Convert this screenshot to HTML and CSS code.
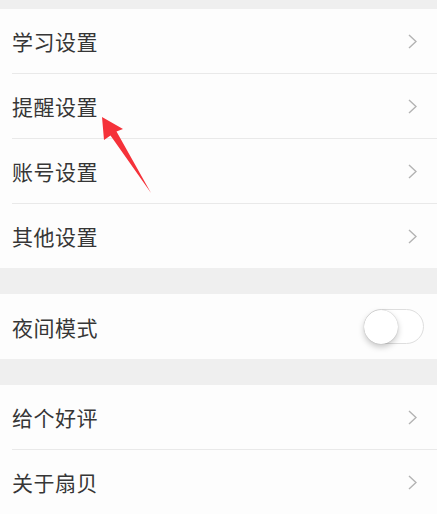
FILE: index.html
```html
<!DOCTYPE html>
<html lang="zh-CN">
<head>
  <meta charset="UTF-8" />
  <meta name="viewport" content="width=device-width, initial-scale=1.0"/>
  <title>设置</title>
  <link rel="stylesheet" href="styles.css">
</head>
<body>
  <div class="settings">
    <div class="group">
      <div class="item"><span class="label">学习设置</span><svg class="chevron" viewBox="0 0 9 15"><polyline points="1,1 8,7.5 1,14"/></svg></div>
      <div class="item"><span class="label">提醒设置</span><svg class="chevron" viewBox="0 0 9 15"><polyline points="1,1 8,7.5 1,14"/></svg></div>
      <div class="item"><span class="label">账号设置</span><svg class="chevron" viewBox="0 0 9 15"><polyline points="1,1 8,7.5 1,14"/></svg></div>
      <div class="item"><span class="label">其他设置</span><svg class="chevron" viewBox="0 0 9 15"><polyline points="1,1 8,7.5 1,14"/></svg></div>
    </div>

    <div class="group">
      <div class="item item-tall">
        <span class="label">夜间模式</span>
        <div class="switch"><div class="knob"></div></div>
      </div>
    </div>

    <div class="group">
      <div class="item"><span class="label">给个好评</span><svg class="chevron" viewBox="0 0 9 15"><polyline points="1,1 8,7.5 1,14"/></svg></div>
      <div class="item"><span class="label">关于扇贝</span><svg class="chevron" viewBox="0 0 9 15"><polyline points="1,1 8,7.5 1,14"/></svg></div>
    </div>
  </div>

  <!-- red annotation arrow pointing at 提醒设置 -->
  <svg class="arrow" viewBox="95 112 60 86">
    <polygon points="102,117 123,129 116.5,131.5 151,193 110.5,135.5 104,140"/>
  </svg>
</body>
</html>
```

FILE: styles.css
```css
body {
  margin: 0;
  background-color: #efefef;
  font-family: "Noto Sans CJK SC", "Noto Sans", sans-serif;
  color: #333;
}

.settings {
  padding-top: 9px;
}

.group {
  background: #fdfdfd;
  padding-left: 12px;
  margin-bottom: 26px;
}

.group:last-child {
  margin-bottom: 0;
}

.item {
  display: flex;
  align-items: center;
  justify-content: space-between;
  height: 64px;
  padding-right: 20px;
}

.item + .item {
  border-top: 1px solid #e9e9e9;
}

.item-tall {
  height: 65px;
}

.label {
  font-size: 21px;
  letter-spacing: 0.5px;
  color: #363636;
}

.chevron {
  width: 9px;
  height: 15px;
  fill: none;
  stroke: #b3b3b3;
  stroke-width: 1.4;
}

.switch {
  width: 58px;
  height: 33px;
  border: 1.5px solid #dedede;
  border-radius: 18px;
  background: #fff;
  margin-right: -7px;
  display: flex;
  align-items: center;
}

.knob {
  width: 34px;
  height: 34px;
  border-radius: 50%;
  background: #fff;
  margin-left: -1px;
  box-shadow: 0 3px 6px rgba(0,0,0,0.22), 0 0 1px rgba(0,0,0,0.3);
}

.arrow {
  position: absolute;
  left: 95px;
  top: 112px;
  width: 60px;
  height: 86px;
  fill: #f5323a;
}
```
